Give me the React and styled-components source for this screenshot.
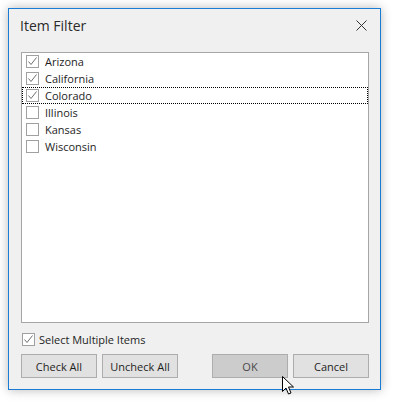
import styled, { createGlobalStyle } from "styled-components";

const GlobalStyle = createGlobalStyle`
  html, body {
    margin: 0;
    padding: 0;
    background: #ffffff;
  }
  body {
    font-family: "Open Sans", "Noto Sans", sans-serif;
  }
`;

const items = [
  { name: "Arizona", checked: true },
  { name: "California", checked: true },
  { name: "Colorado", checked: true, focused: true },
  { name: "Illinois", checked: false },
  { name: "Kansas", checked: false },
  { name: "Wisconsin", checked: false },
];

function CheckMark() {
  return (
    <svg width="11" height="11" viewBox="0 0 11 11">
      <path d="M1.5 5.5 L4 8.5 L9.5 1.5" fill="none" stroke="#6f6f6f" strokeWidth="1" />
    </svg>
  );
}

function Cursor() {
  return (
    <svg width="14" height="20" viewBox="0 0 14 20">
      <path
        d="M0.5 0.5 L0.5 15.5 L4 12 L6.5 18 L9 17 L6.5 11 L11.5 11 Z"
        fill="#ffffff"
        stroke="#000000"
        strokeWidth="1"
        strokeLinejoin="miter"
      />
    </svg>
  );
}

function App() {
  return (
    <>
      <GlobalStyle />
      <Page>
        <Window>
          <TitleBar>
            <Title>Item Filter</Title>
            <CloseButton>
              <svg width="11" height="11" viewBox="0 0 11 11">
                <path d="M0.5 0.5 L10.5 10.5 M10.5 0.5 L0.5 10.5" stroke="#333" strokeWidth="1" />
              </svg>
            </CloseButton>
          </TitleBar>
          <Body>
            <ListBox>
              {items.map((item) => (
                <Row key={item.name} $focused={item.focused}>
                  <Box>{item.checked && <CheckMark />}</Box>
                  <RowLabel>{item.name}</RowLabel>
                </Row>
              ))}
            </ListBox>
            <MultiRow>
              <Box>
                <CheckMark />
              </Box>
              <MultiLabel>Select Multiple Items</MultiLabel>
            </MultiRow>
            <ButtonBar>
              <Group>
                <Button>Check All</Button>
                <Button>Uncheck All</Button>
              </Group>
              <Group>
                <Button $pressed>
                  OK
                  <CursorSpot>
                    <Cursor />
                  </CursorSpot>
                </Button>
                <Button>Cancel</Button>
              </Group>
            </ButtonBar>
          </Body>
        </Window>
      </Page>
    </>
  );
}

const Page = styled.div`
  padding: 8px 0 0 8px;
  width: 393px;
  height: 402px;
  box-sizing: border-box;
  overflow: hidden;
`;

const Window = styled.div`
  width: 373px;
  height: 382px;
  box-sizing: border-box;
  border: 1px solid #1a7bd2;
  background: #f0f0f0;
  box-shadow: 0 0 10px rgba(0, 0, 0, 0.28);
  display: flex;
  flex-direction: column;
`;

const TitleBar = styled.div`
  height: 30px;
  display: flex;
  align-items: center;
  justify-content: space-between;
  padding: 0 13px 0 11px;
  flex-shrink: 0;
`;

const Title = styled.span`
  font-size: 14px;
  color: #2b2b2b;
  margin-top: 2px;
`;

const CloseButton = styled.div`
  width: 11px;
  height: 11px;
  display: flex;
  margin-top: 2px;
`;

const Body = styled.div`
  flex: 1;
  display: flex;
  flex-direction: column;
  padding: 13px 11px 11px 12px;
`;

const ListBox = styled.div`
  height: 271px;
  box-sizing: border-box;
  border: 1px solid #a6a6a6;
  background: #ffffff;
  padding-top: 0px;
`;

const Row = styled.div`
  height: 17px;
  box-sizing: border-box;
  display: flex;
  align-items: center;
  gap: 6px;
  padding-left: 3px;
  border: 1px dotted ${(p) => (p.$focused ? "#000" : "transparent")};
`;

const Box = styled.span`
  width: 13px;
  height: 13px;
  box-sizing: border-box;
  border: 1px solid #a0a0a0;
  background: #ffffff;
  display: flex;
  align-items: center;
  justify-content: center;
  flex-shrink: 0;
`;

const RowLabel = styled.span`
  font-size: 11px;
  color: #1e1e1e;
  line-height: 15px;
`;

const MultiRow = styled.div`
  margin-top: 9px;
  height: 14px;
  display: flex;
  align-items: center;
  gap: 4px;
  padding-left: 1px;
`;

const MultiLabel = styled.span`
  font-size: 11px;
  color: #1e1e1e;
`;

const ButtonBar = styled.div`
  margin-top: 8px;
  display: flex;
  justify-content: space-between;
`;

const Group = styled.div`
  display: flex;
  gap: 5px;
`;

const Button = styled.div`
  position: relative;
  width: 76px;
  height: 24px;
  box-sizing: border-box;
  border: 1px solid ${(p) => (p.$pressed ? "#adadad" : "#adadad")};
  background: ${(p) => (p.$pressed ? "#cccccc" : "#e1e1e1")};
  display: flex;
  align-items: center;
  justify-content: center;
  font-size: 11px;
  color: ${(p) => (p.$pressed ? "#4a4a4a" : "#1e1e1e")};
`;

const CursorSpot = styled.span`
  position: absolute;
  left: 69px;
  top: 21px;
  display: flex;
`;

export default App;
